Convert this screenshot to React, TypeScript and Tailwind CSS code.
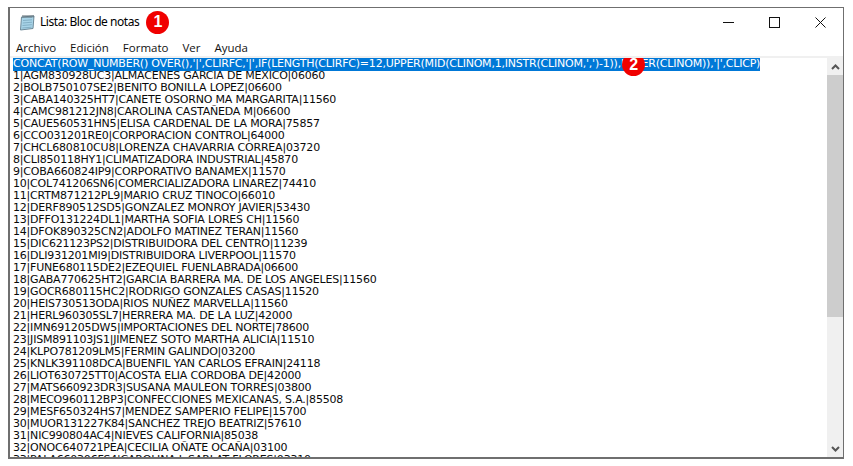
import React from "react";

const lines = [
  "1|AGM830928UC3|ALMACENES GARCIA DE MEXICO|06060",
  "2|BOLB750107SE2|BENITO BONILLA LOPEZ|06600",
  "3|CABA140325HT7|CANETE OSORNO MA MARGARITA|11560",
  "4|CAMC981212JN8|CAROLINA CASTAÑEDA M|06600",
  "5|CAUE560531HN5|ELISA CARDENAL DE LA MORA|75857",
  "6|CCO031201RE0|CORPORACION CONTROL|64000",
  "7|CHCL680810CU8|LORENZA CHAVARRIA CORREA|03720",
  "8|CLI850118HY1|CLIMATIZADORA INDUSTRIAL|45870",
  "9|COBA660824IP9|CORPORATIVO BANAMEX|11570",
  "10|COL741206SN6|COMERCIALIZADORA LINAREZ|74410",
  "11|CRTM871212PL9|MARIO CRUZ TINOCO|66010",
  "12|DERF890512SD5|GONZALEZ MONROY JAVIER|53430",
  "13|DFFO131224DL1|MARTHA SOFIA LORES CH|11560",
  "14|DFOK890325CN2|ADOLFO MATINEZ TERAN|11560",
  "15|DIC621123PS2|DISTRIBUIDORA DEL CENTRO|11239",
  "16|DLI931201MI9|DISTRIBUIDORA LIVERPOOL|11570",
  "17|FUNE680115DE2|EZEQUIEL FUENLABRADA|06600",
  "18|GABA770625HT2|GARCIA BARRERA MA. DE LOS ANGELES|11560",
  "19|GOCR680115HC2|RODRIGO GONZALES CASAS|11520",
  "20|HEIS730513ODA|RIOS NUÑEZ MARVELLA|11560",
  "21|HERL960305SL7|HERRERA MA. DE LA LUZ|42000",
  "22|IMN691205DW5|IMPORTACIONES DEL NORTE|78600",
  "23|JISM891103JS1|JIMENEZ SOTO MARTHA ALICIA|11510",
  "24|KLPO781209LM5|FERMIN GALINDO|03200",
  "25|KNLK391108DCA|BUENFIL YAN CARLOS EFRAIN|24118",
  "26|LIOT630725TT0|ACOSTA ELIA CORDOBA DE|42000",
  "27|MATS660923DR3|SUSANA MAULEON TORRES|03800",
  "28|MECO960112BP3|CONFECCIONES MEXICANAS, S.A.|85508",
  "29|MESF650324HS7|MENDEZ SAMPERIO FELIPE|15700",
  "30|MUOR131227K84|SANCHEZ TREJO BEATRIZ|57610",
  "31|NIC990804AC4|NIEVES CALIFORNIA|85038",
  "32|ONOC640721PEA|CECILIA OÑATE OCAÑA|03100",
  "33|PALA660306FS4|CAROLINA L SARLAT FLORES|03310",
];

function Badge({ n }: { n: number }) {
  return (
    <span className="flex h-[23px] w-[23px] items-center justify-center rounded-full bg-[#f00000] font-['Liberation_Sans',sans-serif] text-[16px] font-bold leading-none text-white">
      {n}
    </span>
  );
}

function NotepadIcon() {
  return (
    <svg width="17" height="17" viewBox="0 0 17 17">
      <path d="M2.5 3 L15 2 L14 14.5 L1.5 16 Z" fill="#a8d4e8" stroke="#6d8a99" strokeWidth="1" />
      <path d="M4 6.5 L13 5.8 M3.8 9 L13 8.2 M3.5 11.5 L12.8 10.7 M3.3 14 L12.5 13.2" stroke="#83b0c6" strokeWidth="1" />
      <path d="M4 1 V4 M6 1 V4 M8 1 V4 M10 1 V4 M12 1 V4 M14 1 V3.5" stroke="#59666e" strokeWidth="1" />
    </svg>
  );
}

export default function App() {
  return (
    <div className="h-[466px] w-[853px] overflow-hidden bg-white pb-[7px] pl-2 pr-[9px] pt-[7px] font-['Noto_Sans',sans-serif]">
      <div className="flex h-[452px] w-full flex-col border border-b-2 border-l-2 border-[#6f6f6f] bg-white">
        <div className="flex h-[30px] shrink-0 items-center pb-[2px] pl-[9px] text-[12px] text-black">
          <NotepadIcon />
          <span className="ml-[4px] tracking-[-0.45px]">Lista: Bloc de notas</span>
          <span className="ml-[7px]">
            <Badge n={1} />
          </span>
          <div className="ml-auto flex h-full items-center">
            <span className="flex w-[46px] justify-center">
              <svg width="11" height="11" viewBox="0 0 11 11">
                <path d="M0 5.5 H11" stroke="#111" strokeWidth="1" />
              </svg>
            </span>
            <span className="flex w-[46px] justify-center">
              <svg width="11" height="11" viewBox="0 0 11 11">
                <rect x="0.5" y="0.5" width="10" height="10" fill="none" stroke="#111" strokeWidth="1" />
              </svg>
            </span>
            <span className="flex w-[46px] justify-center">
              <svg width="11" height="11" viewBox="0 0 11 11">
                <path d="M0.5 0.5 L10.5 10.5 M10.5 0.5 L0.5 10.5" stroke="#111" strokeWidth="1" />
              </svg>
            </span>
          </div>
        </div>
        <div className="flex h-[18px] shrink-0 items-center gap-[14px] pl-[6px] pt-px font-['Open_Sans',sans-serif] text-[11.5px] text-[#111]">
          <span>Archivo</span>
          <span>Edición</span>
          <span>Formato</span>
          <span>Ver</span>
          <span>Ayuda</span>
        </div>
        <div className="flex min-h-0 flex-1 border-t-2 border-[#f0f0f0]">
          <div className="min-w-0 flex-1 overflow-hidden pl-[3px] font-['DejaVu_Sans',sans-serif] text-[11px] leading-[12px] tracking-[-0.2px] text-[#0a0a0a]">
            <div className="relative w-max">
              <div className="-mb-px h-[13px] whitespace-pre bg-[#0078d7] tracking-[-0.215px] text-white">
                CONCAT(ROW_NUMBER() OVER(),'|',CLIRFC,'|',IF(LENGTH(CLIRFC)=12,UPPER(MID(CLINOM,1,INSTR(CLINOM,',')-1)),UPPER(CLINOM)),'|',CLICP)
              </div>
              <span className="absolute left-[609px] top-[-5px]">
                <Badge n={2} />
              </span>
            </div>
            {lines.map((l) => (
              <div key={l} className="whitespace-pre">
                {l}
              </div>
            ))}
          </div>
          <div className="flex w-[16px] shrink-0 flex-col bg-[#f0f0f0]">
            <div className="flex h-[17px] items-center justify-center">
              <svg width="9" height="6" viewBox="0 0 9 6">
                <path d="M1 5 L4.5 1.5 L8 5" fill="none" stroke="#555" strokeWidth="2" />
              </svg>
            </div>
            <div className="h-[242px] bg-[#cdcdcd]" />
            <div className="flex-1" />
            <div className="flex h-[17px] items-center justify-center">
              <svg width="9" height="6" viewBox="0 0 9 6">
                <path d="M1 1 L4.5 4.5 L8 1" fill="none" stroke="#555" strokeWidth="2" />
              </svg>
            </div>
          </div>
        </div>
      </div>
    </div>
  );
}
